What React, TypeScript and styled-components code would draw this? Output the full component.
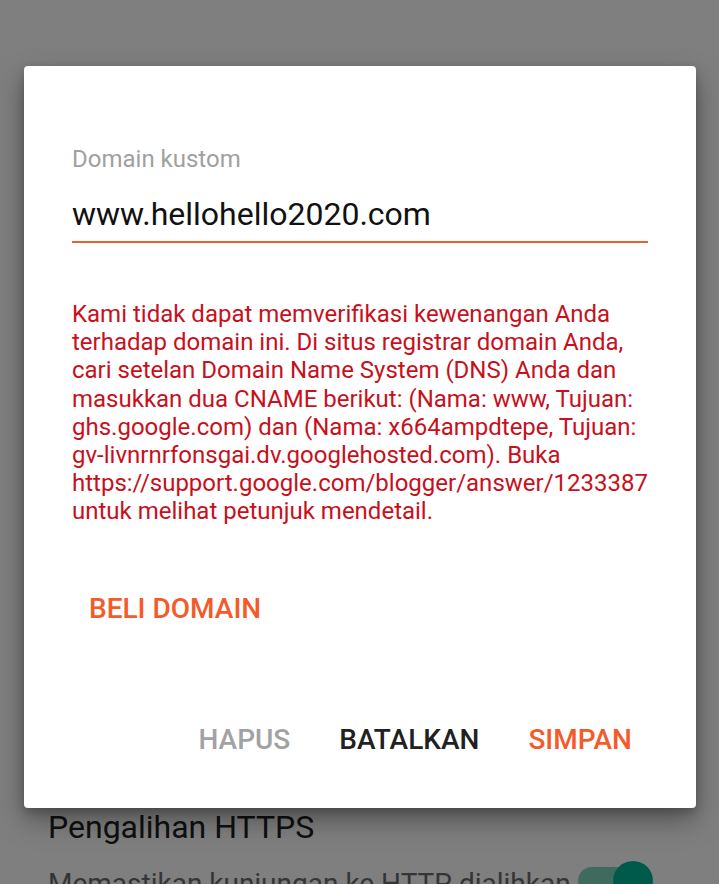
import React from "react";
import styled, { createGlobalStyle } from "styled-components";

const Global = createGlobalStyle`
  html, body { margin: 0; padding: 0; }
  body {
    width: 719px;
    height: 884px;
    overflow: hidden;
    background: #ffffff;
    font-family: Roboto, "Noto Sans", Arial, sans-serif;
  }
`;

const Screen = styled.div`
  position: relative;
  width: 719px;
  height: 884px;
  overflow: hidden;
  background: #ffffff;
`;

const Page = styled.div`
  display: flex;
  flex-direction: column;
  padding: 808px 48px 0 48px;
`;

const SettingTitle = styled.div`
  font-size: 32px;
  color: #202020;
  line-height: 38px;
`;

const SettingRow = styled.div`
  display: flex;
  align-items: flex-start;
  justify-content: space-between;
  margin-top: 21px;
`;

const SettingDesc = styled.div`
  font-size: 28px;
  color: #6b6b6b;
  line-height: 33px;
  white-space: nowrap;
`;

const Switch = styled.div`
  position: relative;
  width: 75px;
  height: 40px;
  margin-top: -6px;
  margin-right: 18px;
  flex: none;
`;

const Track = styled.div`
  position: absolute;
  left: 0;
  top: 6px;
  width: 72px;
  height: 28px;
  border-radius: 14px;
  background: #7ed7bf;
`;

const Thumb = styled.div`
  position: absolute;
  right: 0;
  top: 0;
  width: 40px;
  height: 40px;
  border-radius: 50%;
  background: #00b496;
`;

const Scrim = styled.div`
  position: absolute;
  inset: 0;
  background: rgba(0, 0, 0, 0.5);
`;

const Dialog = styled.div`
  position: absolute;
  left: 24px;
  top: 66px;
  width: 672px;
  height: 742px;
  box-sizing: border-box;
  background: #ffffff;
  border-radius: 4px;
  box-shadow: 0 12px 28px rgba(0, 0, 0, 0.35), 0 4px 10px rgba(0, 0, 0, 0.2);
  display: flex;
  flex-direction: column;
  padding: 79px 0 0 0;
`;

const Field = styled.div`
  display: flex;
  flex-direction: column;
  padding: 0 48px;
`;

const Label = styled.div`
  font-size: 24px;
  line-height: 28px;
  color: #a0a0a0;
`;

const InputValue = styled.div`
  margin-top: 22px;
  font-size: 32px;
  line-height: 38px;
  color: #111111;
  padding-bottom: 8px;
  border-bottom: 2px solid #ea6130;
`;

const ErrorText = styled.div`
  margin-top: 57px;
  font-size: 24px;
  line-height: 28.2px;
  color: #c8101c;
`;

const LinkButton = styled.button<{ $color: string }>`
  background: none;
  border: none;
  padding: 0;
  margin: 0;
  font-family: Roboto, "Noto Sans", Arial, sans-serif;
  font-weight: 500;
  font-size: 28px;
  line-height: 32px;
  color: ${(p) => p.$color};
  cursor: pointer;
`;

const BuyRow = styled.div`
  display: flex;
  padding: 0 0 0 65px;
  margin-top: 67px;
`;

const Actions = styled.div`
  display: flex;
  justify-content: flex-end;
  gap: 49px;
  padding: 0 64px 0 0;
  margin-top: 99px;
`;

export default function App() {
  return (
    <Screen>
      <Global />
      <Page>
        <SettingTitle>Pengalihan HTTPS</SettingTitle>
        <SettingRow>
          <SettingDesc>Memastikan kunjungan ke HTTP dialihkan</SettingDesc>
          <Switch>
            <Track />
            <Thumb />
          </Switch>
        </SettingRow>
      </Page>
      <Scrim />
      <Dialog>
        <Field>
          <Label>Domain kustom</Label>
          <InputValue>www.hellohello2020.com</InputValue>
          <ErrorText>
            Kami tidak dapat memverifikasi kewenangan Anda terhadap domain ini. Di situs
            registrar domain Anda, cari setelan Domain Name System (DNS) Anda dan masukkan dua
            CNAME berikut: (Nama: www, Tujuan: ghs.google.com) dan (Nama: x664ampdtepe, Tujuan:
            gv-livnrnrfonsgai.dv.googlehosted.com). Buka
            https://support.google.com/blogger/answer/1233387 untuk melihat petunjuk mendetail.
          </ErrorText>
        </Field>
        <BuyRow>
          <LinkButton $color="#f45a2a">BELI DOMAIN</LinkButton>
        </BuyRow>
        <Actions>
          <LinkButton $color="#a2a2a2">HAPUS</LinkButton>
          <LinkButton $color="#212121">BATALKAN</LinkButton>
          <LinkButton $color="#f45a2a">SIMPAN</LinkButton>
        </Actions>
      </Dialog>
    </Screen>
  );
}
